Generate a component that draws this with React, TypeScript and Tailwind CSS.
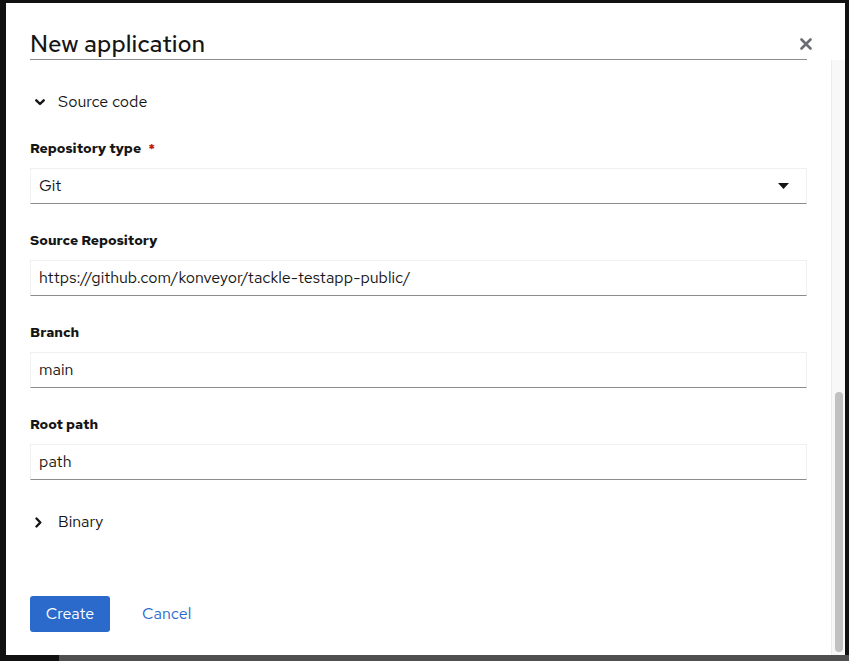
import React from 'react'

const font = { fontFamily: '"Red Hat Text", "Noto Sans", "Liberation Sans", sans-serif' }

function AngleDown() {
  return (
    <svg width="10" height="7" viewBox="0 0 10 7" className="block">
      <path d="M1.3 1.3 L5 5 L8.7 1.3" fill="none" stroke="#151515" strokeWidth="2.4" strokeLinecap="round" strokeLinejoin="round" />
    </svg>
  )
}

function AngleRight() {
  return (
    <svg width="7" height="11" viewBox="0 0 7 11" className="block">
      <path d="M1.5 1.5 L5.3 5.5 L1.5 9.5" fill="none" stroke="#151515" strokeWidth="2.4" strokeLinecap="round" strokeLinejoin="round" />
    </svg>
  )
}

function Toggle({ open, label }: { open: boolean; label: string }) {
  return (
    <div className="flex items-center h-[36px] text-[16px] text-[#151515]">
      <span className="w-[28px] flex justify-start pl-[5px]">{open ? <AngleDown /> : <AngleRight />}</span>
      <span>{label}</span>
    </div>
  )
}

function Field({ label, value, required, select }: { label: string; value: string; required?: boolean; select?: boolean }) {
  return (
    <div className="flex flex-col">
      <div className="h-[21px] mb-[9px] text-[14px] font-bold leading-[21px] text-[#151515] flex">
        <span>{label}</span>
        {required && <span className="ml-[7px] text-[#c9190b]">*</span>}
      </div>
      <div className="h-[36px] flex items-center justify-between border border-[#f0f0f0] border-b-[#8a8d90] pl-[8px] pr-[17px] text-[16px] text-[#151515]">
        <span>{value}</span>
        {select && (
          <svg width="11" height="6" viewBox="0 0 11 6" className="block">
            <path d="M0 0 H11 L5.5 6 Z" fill="#151515" />
          </svg>
        )}
      </div>
    </div>
  )
}

export default function App() {
  return (
    <div className="w-[849px] h-[661px] bg-[#111111] flex flex-col overflow-hidden" style={font}>
      <div className="flex pt-[3px] pl-[6px]">
        <div className="w-[839px] h-[652px] bg-white flex flex-col">
          <div className="flex items-start pt-[27px] pl-[24px]">
            <div className="w-[777px] h-[30px] border-b border-[#8a8d90] text-[24px] leading-[28px] font-medium text-[#151515]">
              New application
            </div>
            <button className="ml-[-8px] mt-[7px] w-[14px] h-[14px] flex items-center justify-center">
              <svg width="12" height="12" viewBox="0 0 12 12">
                <path d="M1.5 1.5 L10.5 10.5 M10.5 1.5 L1.5 10.5" stroke="#6a6e73" strokeWidth="2.6" strokeLinecap="round" />
              </svg>
            </button>
          </div>
          <div className="flex flex-1 min-h-0">
            <div className="flex-1 pl-[24px] pr-[24px] pt-[24px] flex flex-col">
              <Toggle open label="Source code" />
              <div className="flex flex-col gap-[26px] mt-[18px]">
                <Field label="Repository type" value="Git" required select />
                <Field label="Source Repository" value="https://github.com/konveyor/tackle-testapp-public/" />
                <Field label="Branch" value="main" />
                <Field label="Root path" value="path" />
              </div>
              <div className="mt-[24px]">
                <Toggle open={false} label="Binary" />
              </div>
              <div className="mt-[56px] flex items-center gap-[32px]">
                <button className="w-[80px] h-[36px] rounded-[3px] bg-[#2b6acb] text-white text-[16px]">Create</button>
                <button className="text-[16px] text-[#2b6acb]">Cancel</button>
              </div>
            </div>
            <div className="w-[14px] bg-[#f8f8f8] border-l border-[#ececec] flex flex-col justify-end pb-[3px] pl-[3px]">
              <div className="w-[8px] h-[260px] rounded-full bg-[#c1c1c1]" />
            </div>
          </div>
        </div>
      </div>
      <div className="flex-1 flex">
        <div className="w-[59px] bg-[#111111]" />
        <div className="flex-1 bg-[#4f4f4f]" />
      </div>
    </div>
  )
}
